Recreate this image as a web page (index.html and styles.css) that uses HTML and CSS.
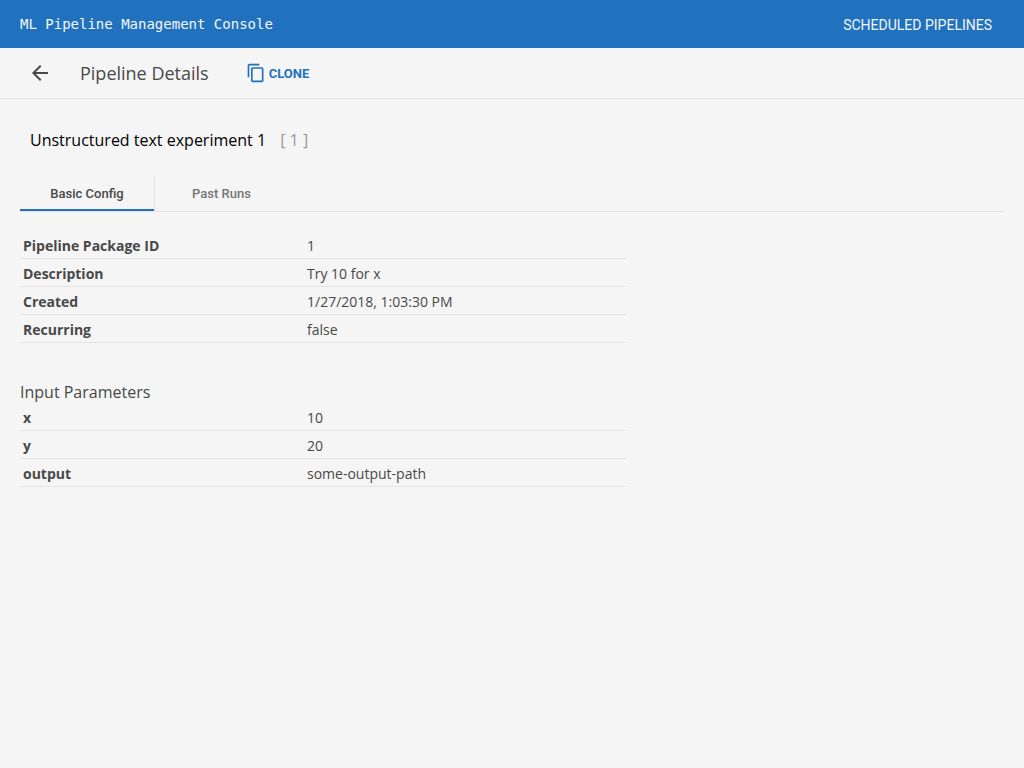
FILE: index.html
```
<!DOCTYPE html>
<html lang="en">
<head>
<meta charset="utf-8">
<title>ML Pipeline Management Console</title>
<link rel="stylesheet" href="styles.css">
</head>
<body>
<header class="app-bar">
  <span class="app-title">ML Pipeline Management Console</span>
  <a class="app-link" href="#">SCHEDULED PIPELINES</a>
</header>
<div class="toolbar">
  <button class="back-button" type="button" aria-label="Back">
    <svg class="icon" viewBox="0 0 24 24" aria-hidden="true"><path d="M20 11H7.83l5.59-5.59L12 4l-8 8 8 8 1.41-1.41L7.83 13H20v-2z"/></svg>
  </button>
  <h1 class="page-title">Pipeline Details</h1>
  <button class="clone-button" type="button">
    <svg class="icon clone-icon" viewBox="0 0 24 24" aria-hidden="true"><path d="M16 1H4c-1.100 0-2 .9-2 2v14h2V3h12V1zm3 4H8c-1.100 0-2 .9-2 2v14c0 1.100.9 2 2 2h11c1.100 0 2-.9 2-2V7c0-1.100-.9-2-2-2zm0 16H8V7h11v14z"/></svg>
    <span class="clone-label">CLONE</span>
  </button>
</div>
<main class="content">
  <h2 class="pipeline-name">Unstructured text experiment 1 <span class="pipeline-id">[ 1 ]</span></h2>
  <div class="tabs" role="tablist">
    <button class="tab tab-selected" type="button" role="tab" aria-selected="true">Basic Config</button>
    <button class="tab" type="button" role="tab" aria-selected="false">Past Runs</button>
  </div>
  <table class="details">
    <tr><th scope="row">Pipeline Package ID</th><td>1</td></tr>
    <tr><th scope="row">Description</th><td>Try 10 for x</td></tr>
    <tr><th scope="row">Created</th><td>1/27/2018, 1:03:30 PM</td></tr>
    <tr><th scope="row">Recurring</th><td>false</td></tr>
  </table>
  <h3 class="section-title">Input Parameters</h3>
  <table class="details">
    <tr><th scope="row">x</th><td>10</td></tr>
    <tr><th scope="row">y</th><td>20</td></tr>
    <tr><th scope="row">output</th><td>some-output-path</td></tr>
  </table>
</main>
</body>
</html>
```

FILE: styles.css
```
* { box-sizing: border-box; }

body {
  margin: 0;
  background: #f5f5f5;
  color: #484848;
  font: 14px/20px "Open Sans", sans-serif;
}

button {
  border: 0;
  padding: 0;
  background: none;
  color: inherit;
  cursor: pointer;
}

.app-bar {
  display: flex;
  align-items: center;
  justify-content: space-between;
  height: 48px;
  padding: 0 32px 0 20px;
  background: #2072be;
  color: #f5f5f5;
}

.app-title { font-family: "DejaVu Sans Mono", monospace; }

.app-link {
  padding-top: 2px;
  color: inherit;
  font-family: Roboto, sans-serif;
  text-decoration: none;
}

.toolbar {
  display: flex;
  align-items: center;
  height: 51px;
  padding: 0 28px;
  border-bottom: 1px solid #e3e3e3;
}

.icon {
  display: block;
  width: 24px;
  height: 24px;
  fill: currentColor;
}

.page-title {
  margin: 0 37px 0 28px;
  font-size: 18px;
  font-weight: 400;
  line-height: 24px;
}

.clone-button {
  display: flex;
  align-items: center;
  gap: 3px;
  color: #2072be;
  font: 700 13px/20px Roboto, sans-serif;
}

.clone-icon {
  width: 20px;
  height: 20px;
}

.clone-label { padding-top: 2px; }

.content { padding: 29px 20px; }

.pipeline-name {
  margin: 0 10px;
  color: #000;
  font-size: 16px;
  font-weight: 400;
  line-height: 24px;
}

.pipeline-id {
  margin-left: 10px;
  color: #999;
}

.tabs {
  display: flex;
  margin: 24px 0 19px;
  border-bottom: 1px solid #e3e3e3;
}

.tab {
  height: 35px;
  padding: 0 38px;
  color: #757575;
  font: 500 13px/20px Roboto, sans-serif;
}

.tab-selected {
  min-width: 134px;
  padding: 2px 30px 0;
  color: #484848;
  border-bottom: 2px solid #2072be;
}

.tab + .tab {
  padding-left: 37px;
  border-left: 1px solid #e3e3e3;
}

.details {
  width: 606px;
  max-width: 100%;
  border-collapse: collapse;
  table-layout: fixed;
}

.details th,
.details td {
  padding: 5px 3px 2px;
  border-bottom: 1px solid #e3e3e3;
  text-align: left;
}

.details th { width: 284px; }

.section-title {
  margin: 38px 0 0;
  font-size: 16px;
  font-weight: 400;
  line-height: 22px;
}
```
